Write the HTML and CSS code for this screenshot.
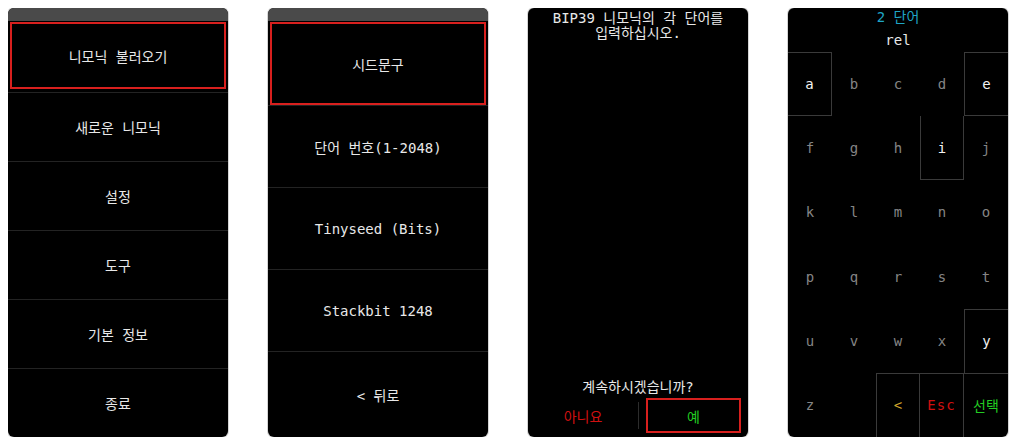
FILE: index.html
```html
<!DOCTYPE html>
<html lang="ko">
<head>
  <meta charset="UTF-8">
  <title>니모닉 불러오기</title>
  <link rel="stylesheet" href="styles.css">
</head>
<body>
  <!-- main menu -->
  <div class="screen">
    <div class="bar"></div>
    <div class="menu main">
      <div class="item selected">니모닉 불러오기</div>
      <div class="item">새로운 니모닉</div>
      <div class="item">설정</div>
      <div class="item">도구</div>
      <div class="item">기본 정보</div>
      <div class="item">종료</div>
    </div>
  </div>

  <!-- load mnemonic submenu -->
  <div class="screen">
    <div class="bar"></div>
    <div class="menu sub">
      <div class="item selected">시드문구</div>
      <div class="item">단어 번호(1-2048)</div>
      <div class="item">Tinyseed (Bits)</div>
      <div class="item">Stackbit 1248</div>
      <div class="item">&lt; 뒤로</div>
    </div>
  </div>

  <!-- prompt -->
  <div class="screen">
    <div class="prompt-text">BIP39 니모닉의 각 단어를<br>입력하십시오.</div>
    <div class="question">계속하시겠습니까?</div>
    <div class="answers">
      <div class="answer no">아니요</div>
      <div class="sep"></div>
      <div class="answer yes"><span>예</span></div>
    </div>
  </div>

  <!-- word entry keypad: bt/br/bb/bl draw the cell edges of the live keys -->
  <div class="screen">
    <div class="word-title">2 단어</div>
    <div class="word-typed">rel</div>
    <div class="keypad">
      <div class="key on bt br bb">a</div><div class="key">b</div><div class="key">c</div><div class="key">d</div><div class="key on bt bl bb">e</div>
      <div class="key">f</div><div class="key">g</div><div class="key">h</div><div class="key on bl br bb">i</div><div class="key">j</div>
      <div class="key">k</div><div class="key">l</div><div class="key">m</div><div class="key">n</div><div class="key">o</div>
      <div class="key">p</div><div class="key">q</div><div class="key">r</div><div class="key">s</div><div class="key">t</div>
      <div class="key">u</div><div class="key">v</div><div class="key">w</div><div class="key">x</div><div class="key on bt bl">y</div>
      <div class="key">z</div><div class="key"></div><div class="key back bt bl br">&lt;</div><div class="key esc bt br">Esc</div><div class="key ok bt">선택</div>
    </div>
  </div>
</body>
</html>
```

FILE: styles.css
```css
* {
  box-sizing: border-box;
}
body {
  margin: 8px;
  background: #fff;
  display: flex;
  gap: 40px;
  font-family: "DejaVu Sans Mono", "Noto Sans CJK KR", monospace;
  font-size: 14px;
}
.screen {
  width: 220px;
  height: 429px;
  background: #000;
  color: #e8e8e8;
  border-radius: 6px;
  box-shadow: 0 0 0 1px #d4d4d4;
  overflow: hidden;
  display: flex;
  flex-direction: column;
}
.bar {
  height: 13px;
  background: #4a4a4a;
}

/* menus */
.menu {
  flex: 1;
  display: flex;
  flex-direction: column;
}
.item {
  flex: 1;
  display: flex;
  align-items: center;
  justify-content: center;
  border-top: 1px solid #232323;
}
.item.selected {
  border: 2px solid #d8201e;
  margin: 1px 2px 3px;
}
.main .item.selected {
  flex: 0 0 67px;
}
.sub .item {
  flex: 0 0 82px;
}
.sub .item.selected {
  flex: 0 0 83px;
  margin-bottom: 0;
}
.sub .item:last-child {
  flex: 1;
}

/* prompt */
.prompt-text {
  text-align: center;
  line-height: 15px;
  padding-top: 3px;
  flex: 1;
}
.question {
  text-align: center;
  line-height: 16px;
  margin-bottom: 3px;
}
.answers {
  display: flex;
  align-items: center;
  height: 35px;
  margin-bottom: 4px;
}
.answer {
  text-align: center;
}
.no {
  width: 110px;
  color: #d01010;
}
.sep {
  width: 1px;
  height: 27px;
  background: #2c2c2c;
}
.yes {
  width: 109px;
  color: #22cc22;
  align-self: stretch;
  display: flex;
  padding: 0 7px;
}
.yes span {
  flex: 1;
  display: flex;
  align-items: center;
  justify-content: center;
  border: 2px solid #d8201e;
}

/* keypad */
.word-title {
  color: #1fa6c6;
  text-align: center;
  line-height: 18px;
}
.word-typed {
  text-align: center;
  line-height: 22px;
  margin: 3px 0 1px;
}
.keypad {
  flex: 1;
  display: grid;
  grid-template-columns: repeat(5, 1fr);
  grid-template-rows: repeat(6, 1fr);
}
.key {
  color: #858585;
  display: flex;
  align-items: center;
  justify-content: center;
}
.key.on {
  color: #f2f2f2;
}
.bt { border-top: 1px solid #3a3a3a; }
.br { border-right: 1px solid #3a3a3a; }
.bb { border-bottom: 1px solid #3a3a3a; }
.bl { border-left: 1px solid #3a3a3a; }
.key.back {
  color: #d4a72c;
}
.key.esc {
  color: #d01010;
  letter-spacing: 1px;
}
.key.ok {
  color: #22cc22;
}
```
